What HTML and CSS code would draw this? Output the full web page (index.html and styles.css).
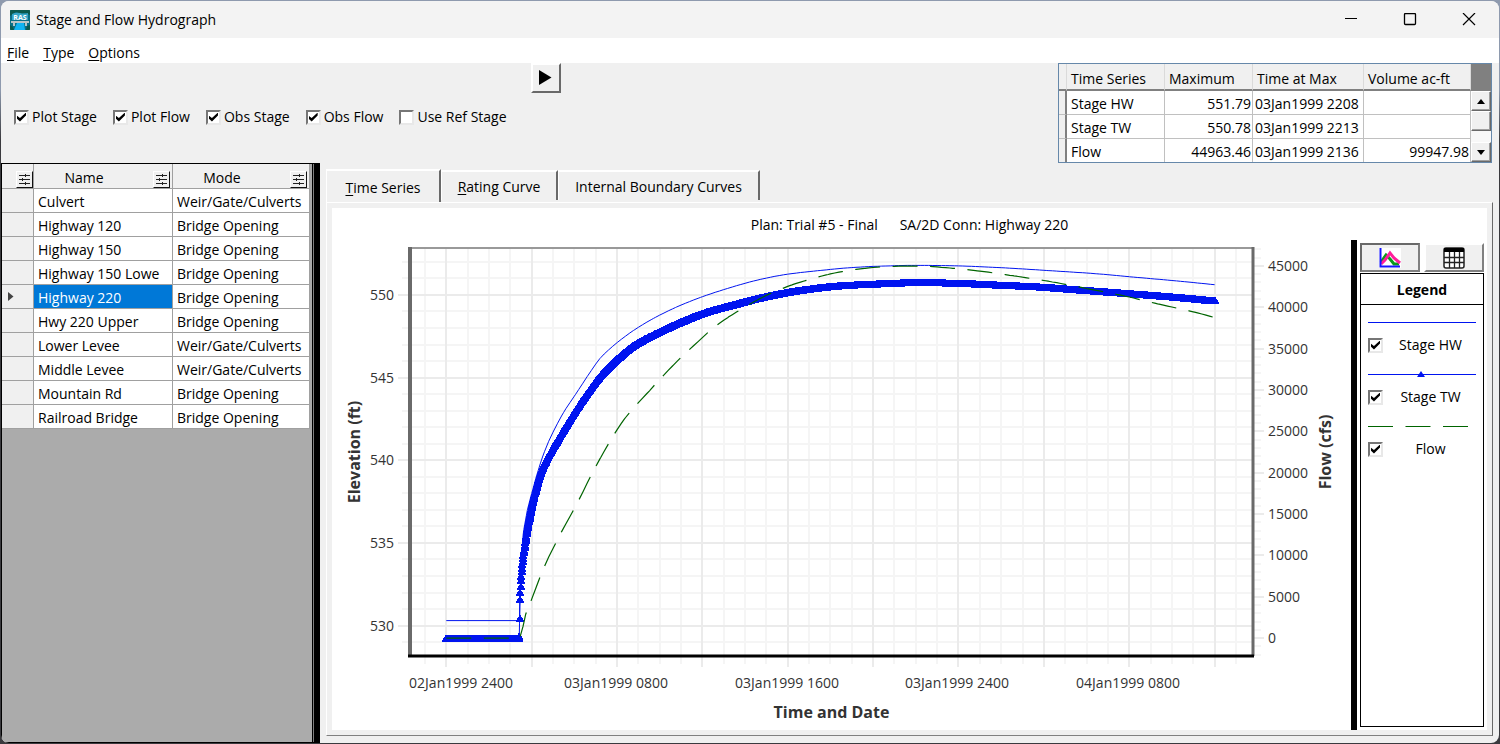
FILE: index.html
```html
<!DOCTYPE html>
<html lang="en">
<head>
  <meta charset="UTF-8">
  <meta name="viewport" content="width=device-width, initial-scale=1.0">
  <title>Stage and Flow Hydrograph</title>
  <link rel="stylesheet" href="styles.css">
</head>
<body>
  <div class="window">
    <header class="titlebar">
      <svg class="app-icon" width="20" height="20" viewBox="0 0 20 20" aria-hidden="true">
        <rect width="20" height="20" rx="1" fill="#0b6f86"/>
        <path d="M0 1q0-1 1-1h18q1 0 1 1v4l-4-2-5 1-5-2-6 4z" fill="#0c5a4e"/>
        <path d="M2 4q4-2 8-1t8 0v7H2z" fill="#35a5c6"/>
        <path d="M1 11h18v2h-2v3h-2v-3H5v3H3v-3H1z" fill="#b9c4c6"/>
        <path d="M7 13h7l1 7H4z" fill="#12b4f2"/>
        <path d="M0 15l3 2 1 3H1q-1 0-1-1zM20 15l-3 1-1 4h3q1 0 1-1z" fill="#0c5a4e"/>
        <text x="10" y="10" text-anchor="middle" class="icon-text">RAS</text>
      </svg>
      <h1>Stage and Flow Hydrograph</h1>
      <div class="window-buttons">
        <button type="button" aria-label="Minimize">
          <svg width="14" height="14" viewBox="0 0 14 14"><path d="M1 5.500h12" stroke="#000" fill="none"/></svg>
        </button>
        <button type="button" aria-label="Maximize">
          <svg width="14" height="14" viewBox="0 0 14 14"><rect x="1.500" y="0.500" width="11" height="11" rx="1" stroke="#000" stroke-width="1.300" fill="none"/></svg>
        </button>
        <button type="button" aria-label="Close">
          <svg width="14" height="14" viewBox="0 0 14 14"><path d="M1 0l12 12M13 0L1 12" stroke="#000" stroke-width="1.200" fill="none"/></svg>
        </button>
      </div>
    </header>

    <nav class="menubar">
      <a href="#"><u>F</u>ile</a>
      <a href="#"><u>T</u>ype</a>
      <a href="#"><u>O</u>ptions</a>
    </nav>

    <section class="toolbar">
      <div class="plot-options">
        <label><input type="checkbox" checked>Plot Stage</label>
        <label><input type="checkbox" checked>Plot Flow</label>
        <label><input type="checkbox" checked>Obs Stage</label>
        <label><input type="checkbox" checked>Obs Flow</label>
        <label><input type="checkbox">Use Ref Stage</label>
      </div>
      <button type="button" class="play" aria-label="Play">
        <svg width="13" height="16" viewBox="0 0 13 16"><path d="M0 0l12.500 7.500L0 15z"/></svg>
      </button>
      <div class="summary">
        <table>
          <colgroup>
            <col class="s-mark"><col class="s-series"><col class="s-max"><col class="s-time"><col class="s-volume">
          </colgroup>
          <thead>
            <tr><th></th><th>Time Series</th><th>Maximum</th><th>Time at Max</th><th>Volume ac-ft</th></tr>
          </thead>
          <tbody>
            <tr><th></th><td>Stage HW</td><td class="num">551.79</td><td class="time">03Jan1999 2208</td><td></td></tr>
            <tr><th></th><td>Stage TW</td><td class="num">550.78</td><td class="time">03Jan1999 2213</td><td></td></tr>
            <tr><th></th><td>Flow</td><td class="num">44963.46</td><td class="time">03Jan1999 2136</td><td class="num">99947.98</td></tr>
          </tbody>
        </table>
        <div class="scrollbar">
          <div class="scroll-corner"></div>
          <button type="button" aria-label="Scroll up"><svg width="8" height="5" viewBox="0 0 8 5"><path d="M4 0l4 5H0z"/></svg></button>
          <div class="scroll-thumb"></div>
          <div class="scroll-track"></div>
          <button type="button" aria-label="Scroll down"><svg width="8" height="5" viewBox="0 0 8 5"><path d="M4 5L0 0h8z"/></svg></button>
        </div>
      </div>
    </section>

    <main class="workspace">
      <aside class="connections">
        <svg width="0" height="0" class="defs" aria-hidden="true">
          <symbol id="filter" viewBox="0 0 12 12">
            <path d="M1 2.500h11M1 6.500h11M1 10.500h11" stroke="#222" fill="none"/>
            <path d="M7.500 1v3M4.500 5v3M7.500 9v3" stroke="#222" fill="none"/>
          </symbol>
        </svg>
        <table>
          <colgroup><col class="c-mark"><col class="c-name"><col class="c-mode"></colgroup>
          <thead>
            <tr>
              <th><div class="head"><span></span><button type="button" aria-label="Filter rows"><svg width="12" height="12"><use href="#filter"/></svg></button></div></th>
              <th><div class="head"><span>Name</span><button type="button" aria-label="Filter name"><svg width="12" height="12"><use href="#filter"/></svg></button></div></th>
              <th><div class="head"><span>Mode</span><button type="button" aria-label="Filter mode"><svg width="12" height="12"><use href="#filter"/></svg></button></div></th>
            </tr>
          </thead>
          <tbody>
            <tr><th></th><td>Culvert</td><td>Weir/Gate/Culverts</td></tr>
            <tr><th></th><td>Highway 120</td><td>Bridge Opening</td></tr>
            <tr><th></th><td>Highway 150</td><td>Bridge Opening</td></tr>
            <tr><th></th><td>Highway 150 Lowe</td><td>Bridge Opening</td></tr>
            <tr class="current"><th><svg width="6" height="9" viewBox="0 0 6 9"><path d="M0 0l5.500 4.500L0 9z" fill="#444"/></svg></th><td>Highway 220</td><td>Bridge Opening</td></tr>
            <tr><th></th><td>Hwy 220 Upper</td><td>Bridge Opening</td></tr>
            <tr><th></th><td>Lower Levee</td><td>Weir/Gate/Culverts</td></tr>
            <tr><th></th><td>Middle Levee</td><td>Weir/Gate/Culverts</td></tr>
            <tr><th></th><td>Mountain Rd</td><td>Bridge Opening</td></tr>
            <tr><th></th><td>Railroad Bridge</td><td>Bridge Opening</td></tr>
          </tbody>
        </table>
      </aside>

      <section class="plots">
        <div class="tabs" role="tablist">
          <button type="button" role="tab" aria-selected="true" class="tab-time"><u>T</u>ime Series</button>
          <button type="button" role="tab" aria-selected="false" class="tab-rating"><u>R</u>ating Curve</button>
          <button type="button" role="tab" aria-selected="false" class="tab-boundary">Internal Boundary Curves</button>
        </div>
        <div class="tab-panel" role="tabpanel">
          <h2>Plan: Trial #5 - Final      SA/2D Conn: Highway 220</h2>
          <div class="plot-row">
            <div class="chart-box"><svg id="chart" role="img" aria-label="Stage and flow over time"></svg></div>
            <div class="legend">
              <div class="view-buttons">
                <button type="button" class="pressed" aria-label="Plot view">
                  <svg width="22" height="20" viewBox="0 0 22 20">
                    <rect width="22" height="20" fill="#fff"/>
                    <path d="M2 14l5-7 4 4 4 5h5" stroke="#0a9a1a" stroke-width="3" fill="none"/>
                    <path d="M2 16l4-4 5-7 4 5 6 5" stroke="#ff1e9b" stroke-width="3" fill="none"/>
                    <path d="M1.500 0v18.500H21" stroke="#1414ff" stroke-width="2" fill="none"/>
                  </svg>
                </button>
                <button type="button" aria-label="Table view">
                  <svg width="22" height="22" viewBox="0 0 22 22">
                    <rect x="1" y="1" width="20" height="20" rx="2" fill="#fff" stroke="#222" stroke-width="1.500"/>
                    <path d="M1 1h20v4H1z" fill="#000"/>
                    <path d="M1 10.500h20M1 15.500h20M6.500 5v16M11.500 5v16M16.500 5v16" stroke="#222" stroke-width="1.300" fill="none"/>
                  </svg>
                </button>
              </div>
              <div class="legend-box">
                <h3>Legend</h3>
                <ul>
                  <li>
                    <svg class="swatch" height="9"><line class="hw" x1="0" y1="4.500" x2="100%" y2="4.500"/></svg>
                    <label><input type="checkbox" checked><span>Stage HW</span></label>
                  </li>
                  <li>
                    <svg class="swatch" height="9"><line class="hw" x1="0" y1="4.500" x2="100%" y2="4.500"/><svg x="50%" y="0" class="marker-box"><path class="tw" d="M-1 1l4 6h-8z"/></svg></svg>
                    <label><input type="checkbox" checked><span>Stage TW</span></label>
                  </li>
                  <li>
                    <svg class="swatch" height="9"><line class="flow" x1="0" y1="4.500" x2="100%" y2="4.500"/></svg>
                    <label><input type="checkbox" checked><span>Flow</span></label>
                  </li>
                </ul>
              </div>
            </div>
          </div>
        </div>
      </section>
    </main>
  </div>
  <script src="chart.js"></script>
</body>
</html>
```
FILE: styles.css
```css
* {
  box-sizing: border-box;
}
body {
  margin: 0;
  padding: 1px;
  height: 100vh;
  min-height: 600px;
  background: linear-gradient(#8e9aae 90px, #3a3a3e 140px);
  font-family: "Segoe UI", "Open Sans", sans-serif;
  font-size: 14px;
  line-height: 20px;
  color: #000;
}
button {
  font: inherit;
  color: inherit;
  padding: 0;
  border: none;
  background: none;
}
h1, h2, h3, ul {
  margin: 0;
  padding: 0;
  font-size: 14px;
  font-weight: normal;
}
table {
  border-collapse: separate;
  border-spacing: 0;
  table-layout: fixed;
}
th, td {
  font-weight: normal;
  text-align: left;
  white-space: nowrap;
  overflow: hidden;
}
.window {
  height: 100%;
  display: flex;
  flex-direction: column;
  background: #f0f0f0;
  border-radius: 8px;
  overflow: hidden;
}

/* title bar and menu */
.titlebar {
  display: flex;
  align-items: center;
  height: 37px;
  padding-left: 9px;
  background: #f3f3f3;
}
.app-icon {
  margin-right: 6px;
}
.icon-text {
  font-size: 7px;
  font-weight: bold;
  fill: #fff;
}
.window-buttons {
  display: flex;
  margin-left: auto;
  padding-right: 1px;
}
.window-buttons button {
  display: flex;
  align-items: center;
  justify-content: center;
  width: 59px;
  height: 37px;
}
.menubar {
  display: flex;
  align-items: center;
  gap: 14px;
  height: 25px;
  padding: 4px 6px 0;
  background: #fff;
}
.menubar a {
  color: #000;
  text-decoration: none;
}
u {
  text-decoration-thickness: 1px;
  text-underline-offset: 2px;
}

/* toolbar */
.toolbar {
  display: flex;
  align-items: flex-start;
  height: 100px;
  padding: 0 7px 0 13px;
}
.plot-options {
  display: flex;
  gap: 16px;
  padding-top: 44px;
}
.plot-options label {
  display: flex;
  align-items: center;
  gap: 3px;
  white-space: nowrap;
}
input[type="checkbox"] {
  appearance: none;
  flex: none;
  width: 15px;
  height: 15px;
  margin: 0;
  background: #fff;
  border: 2px solid;
  border-color: #767676 #e8e8e8 #e8e8e8 #767676;
}
input[type="checkbox"]:checked::before {
  content: "";
  display: block;
  width: 9px;
  height: 9px;
  margin: 1px;
  background: #000;
  clip-path: polygon(0 35%, 33% 62%, 100% 0, 100% 33%, 33% 100%, 0 70%);
}
.play {
  display: flex;
  align-items: center;
  justify-content: center;
  width: 30px;
  height: 30px;
  margin-left: 24px;
  border: 2px solid;
  border-color: #fff #696969 #696969 #fff;
}

/* summary table */
.summary {
  display: flex;
  margin-left: auto;
  height: 100px;
  border: 1px solid #6688aa;
  background: #fff;
  overflow: hidden;
}
.summary table {
  width: 412px;
}
.s-mark { width: 8px; }
.s-series { width: 98px; }
.s-max { width: 88px; }
.s-time { width: 111px; }
.s-volume { width: 107px; }
.summary th, .summary td {
  height: 24px;
  padding: 2px 4px 0;
  border-right: 1px solid #c0c0c0;
  border-bottom: 1px solid #c0c0c0;
}
.summary th {
  background: #f0f0f0;
}
.summary thead th {
  height: 27px;
  padding-top: 4px;
  border-right-color: #dadada;
  border-bottom: 2px solid #808080;
}
.summary tbody th {
  border-right: 2px solid #808080;
}
.summary td.num {
  padding: 2px 1px 0;
  text-align: right;
}
.summary td.time {
  padding: 2px 2px 0;
}
.scrollbar {
  display: flex;
  flex-direction: column;
  width: 20px;
  background: #f8f8f8;
}
.scroll-corner {
  height: 27px;
  background: #808080;
}
.scrollbar button, .scroll-thumb {
  display: flex;
  align-items: center;
  justify-content: center;
  height: 20px;
  background: #f0f0f0;
  border: 1px solid;
  border-color: #fff #696969 #696969 #fff;
  box-shadow: inset -1px -1px #a0a0a0;
}
.scroll-track {
  flex: 1;
}

/* connection list */
.workspace {
  flex: 1;
  display: flex;
  min-height: 0;
}
.connections {
  flex: none;
  width: 319px;
  background: #ababab;
  border: 1px solid #000;
  border-right: 6px solid #000;
  box-shadow: inset -1px 0 #808080, inset -2px 0 #000;
}
.defs {
  display: block;
}
.connections table {
  width: 308px;
}
.c-mark { width: 32px; }
.c-name { width: 139px; }
.c-mode { width: 137px; }
.connections th, .connections td {
  height: 24px;
  padding: 2px 4px 0;
  border-right: 1px solid #a0a0a0;
  border-bottom: 1px solid #a0a0a0;
}
.connections td {
  background: #fff;
}
.connections th {
  background: #f0f0f0;
}
.connections tbody th {
  padding: 0 6px;
}
.connections thead th {
  height: 25px;
  padding: 0;
}
.head {
  display: flex;
  align-items: flex-end;
  height: 24px;
}
.head span {
  flex: 1;
  padding-right: 19px;
  text-align: center;
  line-height: 20px;
}
.head button {
  display: flex;
  width: 17px;
  height: 17px;
  margin-right: 2px;
  padding: 1px;
  border: 1px solid;
  border-color: #fff #111 #111 #fff;
}
.head span:empty {
  padding: 0;
}
.connections th:first-child .head button {
  margin-right: 0;
}
.connections th svg {
  display: block;
}
.current td:nth-child(2) {
  background: #0078d7;
  color: #fff;
}

/* tabs */
.plots {
  flex: 1;
  display: flex;
  flex-direction: column;
  min-width: 0;
  padding: 6px 6px 7px 6px;
}
.tabs {
  display: flex;
  align-items: flex-end;
  height: 33px;
}
.tabs button {
  height: 30px;
  margin-bottom: 2px;
  padding-top: 2px;
  background: #f0f0f0;
  border-top: 2px solid #fff;
  border-left: 1px solid #fff;
  border-right: 2px solid #696969;
  white-space: nowrap;
}
.tabs button[aria-selected="true"] {
  height: 34px;
  margin-bottom: -1px;
}
.tab-time { width: 115px; }
.tab-rating { width: 117px; }
.tab-boundary { width: 202px; }
.tab-panel {
  flex: 1;
  display: flex;
  flex-direction: column;
  min-height: 0;
  background: #fff;
  border: 1px solid #fff;
  border-right-color: #696969;
  border-bottom-color: #808080;
  box-shadow: inset 0 0 0 5px #f0f0f0;
  padding: 5px;
}
.tab-panel h2 {
  height: 32px;
  padding-top: 7px;
  text-align: center;
  white-space: pre;
}
.plot-row {
  flex: 1;
  display: flex;
  min-height: 0;
}
.chart-box {
  flex: 1;
  min-width: 0;
  border-right: 6px solid #000;
}
#chart {
  display: block;
  width: 100%;
  height: 100%;
}

/* chart */
#chart text {
  font-size: 14px;
  fill: #333;
}
#chart .axis-title {
  font-size: 16px;
  font-weight: bold;
}
.minor {
  stroke: #f5f5f5;
  stroke-width: 2;
}
.major {
  stroke: #ebebeb;
  stroke-width: 2;
}
.hw {
  fill: none;
  stroke: #0014f0;
  stroke-width: 1;
}
.tw {
  fill: #0014f0;
}
.flow {
  fill: none;
  stroke: #006400;
  stroke-width: 1.2;
  stroke-dasharray: 25 12.5;
}

/* legend */
.legend {
  display: flex;
  flex-direction: column;
  flex: none;
  width: 130px;
  padding: 3px 3px 3px 3px;
}
.view-buttons {
  display: flex;
  justify-content: space-between;
  height: 30px;
}
.view-buttons button {
  display: flex;
  align-items: center;
  justify-content: center;
  width: 60px;
  height: 29px;
  background: #f0f0f0;
  border: 2px solid;
  border-color: #fff #808080 #808080 #fff;
}
.view-buttons .pressed {
  border-color: #696969 #808080 #808080 #696969;
}
.legend-box {
  flex: 1;
  border: 1px solid #000;
}
.legend-box h3 {
  height: 31px;
  line-height: 32px;
  font-weight: bold;
  text-align: center;
  border-bottom: 1px solid #000;
}
.legend ul {
  list-style: none;
  padding: 13px 7px;
}
.legend li {
  height: 52px;
}
.swatch {
  display: block;
  width: 100%;
}
.marker-box {
  overflow: visible;
}
.legend label {
  display: flex;
  align-items: center;
  height: 36px;
}
.legend label span {
  flex: 1;
  padding-left: 2px;
  text-align: center;
}
```
FILE: chart.js
```js
const SVG_NS = 'http://www.w3.org/2000/svg';
const chart = document.getElementById('chart');

// [hours after 02Jan1999 2400, value]
const stageHW = [
  [0, 530.3], [3.41, 530.3], [3.44, 530.6], [3.46, 532], [3.49, 533.2], [3.63, 535.8], [4.09, 538.4],
  [4.51, 540.2], [4.8, 541.15], [5.5, 542.9], [6.06, 543.99], [6.65, 545.15], [7.23, 546.2], [8.02, 547.13],
  [8.77, 547.85], [9.71, 548.58], [10.74, 549.24], [11.91, 549.85], [13.17, 550.39], [14.71, 550.94],
  [16.02, 551.26], [17.52, 551.48], [19.06, 551.66], [20.33, 551.74], [21.96, 551.79], [23.6, 551.77],
  [25.8, 551.66], [28.14, 551.48], [30.48, 551.28], [32.02, 551.1], [34.22, 550.85], [36, 550.62]
];
const stageTW = [
  [0, 529.22], [3.39, 529.22], [3.42, 529.4], [3.43, 530.1], [3.44, 531.18], [3.47, 532.1], [3.53, 533.23],
  [3.63, 534.4], [3.77, 535.6], [3.95, 536.86], [4.19, 538.2], [4.47, 539.4], [4.8, 540.3],
  [5.22, 541.25], [5.68, 542.24], [6.43, 543.75], [7.23, 545.14], [8.02, 546.16], [8.77, 546.95],
  [10.04, 547.82], [11.11, 548.45], [12.23, 549], [13.45, 549.43], [14.71, 549.85], [15.98, 550.18],
  [17.05, 550.39], [18.32, 550.57], [20.33, 550.7], [22.22, 550.78], [24.21, 550.72], [25.8, 550.63],
  [27.81, 550.51], [29.36, 550.36], [30.95, 550.21], [32.49, 550.06], [34.36, 549.87], [36, 549.67]
];
const flow = [
  [0, 0], [3.44, 0], [3.72, 2900], [3.95, 4360], [4.56, 8450], [5.31, 12400], [6.15, 16400], [6.9, 20250],
  [7.23, 21800], [7.74, 24100], [8.35, 26500], [8.77, 27800], [9.52, 29900], [9.94, 31100], [10.64, 33000],
  [11.11, 34200], [11.91, 36100], [12.37, 37200], [13.22, 38800], [13.73, 39600], [14.67, 41000],
  [15.32, 41800], [16.26, 42750], [16.82, 43200], [17.89, 43950], [18.55, 44300], [19.63, 44700],
  [20.33, 44850], [21.6, 44963], [22.4, 44940], [23.74, 44700], [24.87, 44400], [26.55, 43800],
  [28.28, 43100], [30.01, 42250], [31.7, 41400], [33.33, 40400], [35.06, 39400], [36, 38750]
];
const timeLabels = ['02Jan1999 2400', '03Jan1999 0800', '03Jan1999 1600', '03Jan1999 2400', '04Jan1999 0800'];

function add(name, attrs, text) {
  const el = document.createElementNS(SVG_NS, name);
  for (const key in attrs) el.setAttribute(key, attrs[key]);
  if (text !== undefined) el.textContent = text;
  chart.appendChild(el);
  return el;
}

function line(x1, y1, x2, y2, cls) {
  add('line', { x1, y1, x2, y2, class: cls });
}

function slope(series, i) {
  const [a, b] = [series[i], series[i + 1]];
  return (b[1] - a[1]) / (b[0] - a[0]);
}

// tangent at a point, flat at peaks so the curve does not overshoot
function tangent(series, i) {
  if (i === 0) return slope(series, 0);
  if (i === series.length - 1) return slope(series, i - 1);
  const before = slope(series, i - 1);
  const after = slope(series, i);
  return before * after <= 0 ? 0 : 2 * before * after / (before + after);
}

function valueAt(series, t) {
  let i = 0;
  while (i < series.length - 2 && series[i + 1][0] < t) i++;
  const [t0, v0] = series[i];
  const [t1, v1] = series[i + 1];
  const h = t1 - t0;
  const s = (t - t0) / h;
  return v0 * (1 + 2 * s) * (1 - s) ** 2 + v1 * s * s * (3 - 2 * s) +
    h * tangent(series, i) * s * (1 - s) ** 2 - h * tangent(series, i + 1) * s * s * (1 - s);
}

function draw() {
  chart.innerHTML = '';
  const width = chart.clientWidth;
  const height = chart.clientHeight;
  const left = 78, right = width - 98, top = 8, bottom = height - 74;

  const px = t => left + (t + 1.7) / 39.5 * (right - left);
  const pyStage = v => bottom - (v - 528.16) / 24.68 * (bottom - top);
  const pyFlow = v => bottom - (v + 2150) / 49300 * (bottom - top);

  // grid, minor lines first
  for (const cls of ['minor', 'major']) {
    const big = cls === 'major';
    for (let t = -1; t <= 37; t++) {
      if ((t % 4 === 0) !== big) continue;
      const x = Math.round(px(t));
      line(x, top, x, bottom + (big ? 11 : 8), cls);
    }
    for (let v = 529; v <= 552; v++) {
      if ((v % 5 === 0) !== big) continue;
      const y = Math.round(pyStage(v));
      line(left - (big ? 12 : 8), y, right, y, cls);
    }
    for (let q = -2; q <= 47; q++) {
      if ((q % 5 === 0) !== big) continue;
      const y = Math.round(pyFlow(q * 1000));
      line(right, y, right + (big ? 11 : 8), y, cls);
    }
  }

  // plot frame
  add('path', { d: `M${left} ${top}H${right}`, stroke: '#999', 'stroke-width': 2 });
  add('path', { d: `M${left} ${top - 1}V${bottom}`, stroke: '#6a6a6a', 'stroke-width': 4 });
  add('path', { d: `M${right} ${top - 1}V${bottom}`, stroke: '#6a6a6a', 'stroke-width': 3 });
  add('path', { d: `M${left - 2} ${bottom}H${right + 1}`, stroke: '#000', 'stroke-width': 3 });

  // series
  const path = (series, py) => {
    const times = series.map(point => point[0]);
    for (let t = 3.6; t < 36; t += 0.2) times.push(t);
    times.sort((a, b) => a - b);
    return 'M' + times.map(t => px(t).toFixed(1) + ' ' + py(valueAt(series, t)).toFixed(1)).join('L');
  };
  add('path', { d: path(stageHW, pyStage), class: 'hw' });
  add('path', { d: path(stageTW, pyStage), class: 'hw' });
  let markers = '';
  for (let i = 0; i <= 36 * 60; i++) {
    const x = Math.round(px(i / 60));
    const y = Math.round(pyStage(valueAt(stageTW, i / 60)));
    markers += `M${x} ${y - 4}l4 7v1h-8v-1z`;
  }
  add('path', { d: markers, class: 'tw', 'shape-rendering': 'crispEdges' });
  add('path', { d: path(flow, pyFlow), class: 'flow' });

  // labels
  for (let v = 530; v <= 550; v += 5) {
    add('text', { x: left - 16, y: Math.round(pyStage(v)) + 5, 'text-anchor': 'end' }, v);
  }
  for (let q = 0; q <= 45000; q += 5000) {
    add('text', { x: right + 15, y: Math.round(pyFlow(q)) + 5 }, q);
  }
  timeLabels.forEach((label, i) => {
    const text = add('text', { y: bottom + 32, 'text-anchor': 'middle' }, label);
    const half = text.getComputedTextLength() / 2;
    text.setAttribute('x', Math.round(Math.max(px(i * 8) - 1, left + half - 1)));
  });

  const midX = (left + right) / 2;
  const midY = (top + bottom) / 2;
  add('text', { x: midX, y: bottom + 62, 'text-anchor': 'middle', class: 'axis-title' }, 'Time and Date');
  add('text', { transform: `translate(28 ${midY}) rotate(-90)`, 'text-anchor': 'middle', class: 'axis-title' }, 'Elevation (ft)');
  add('text', { transform: `translate(${right + 78} ${midY}) rotate(-90)`, 'text-anchor': 'middle', class: 'axis-title' }, 'Flow (cfs)');
}

draw();
window.addEventListener('resize', draw);
```
